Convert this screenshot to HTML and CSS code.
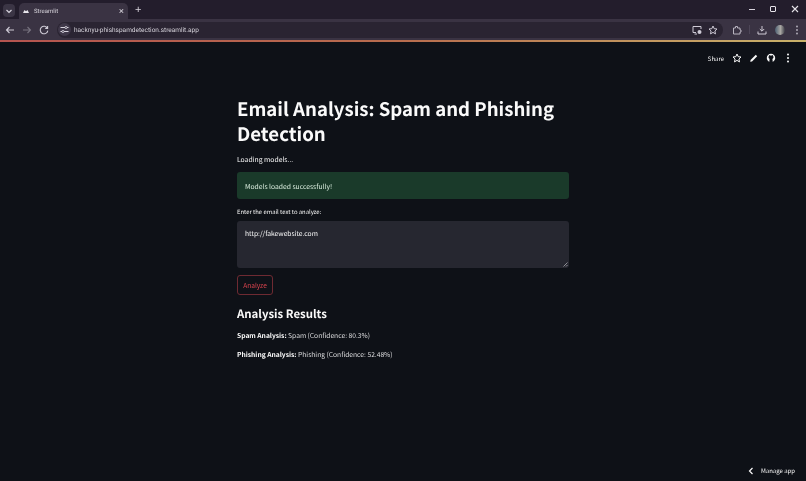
FILE: index.html
```html
<!DOCTYPE html>
<html lang="en">
<head>
    <meta charset="UTF-8">
    <title>Streamlit</title>
    <link rel="stylesheet" href="styles.css">
</head>
<body>
    <div class="tabstrip">
        <div class="tab-search">
            <svg width="8" height="8" viewBox="0 0 8 8"><path d="M1.5 3 L4 5.5 L6.5 3" fill="none" stroke="#d8d4de" stroke-width="1.2"/></svg>
        </div>
        <div class="tab">
            <svg width="6" height="5" viewBox="0 0 8 6"><path d="M0 5 L2 1 L4 2.5 L6 1 L8 5 Z" fill="#e8e6ec"/></svg>
            <span class="tab-title">Streamlit</span>
            <span class="tab-close">&#215;</span>
        </div>
        <span class="new-tab">+</span>
        <div class="win-controls">
            <span class="win-min"></span>
            <span class="win-max"></span>
            <svg width="8" height="8" viewBox="0 0 8 8"><path d="M1 1 L7 7 M7 1 L1 7" stroke="#e6e3ea" stroke-width="1.1"/></svg>
        </div>
    </div>

    <div class="toolbar">
        <div class="nav-icons">
            <svg width="10" height="10" viewBox="0 0 10 10"><path d="M9 5 H1.5 M4.5 2 L1.5 5 L4.5 8" fill="none" stroke="#cfcbd6" stroke-width="1.1"/></svg>
            <svg width="10" height="10" viewBox="0 0 10 10"><path d="M1 5 H8.5 M5.5 2 L8.5 5 L5.5 8" fill="none" stroke="#77727f" stroke-width="1.1"/></svg>
            <svg width="10" height="10" viewBox="0 0 10 10"><path d="M8.4 3.2 A3.8 3.8 0 1 0 8.8 5.6 M8.6 1 V3.4 H6.2" fill="none" stroke="#cfcbd6" stroke-width="1.1"/></svg>
        </div>
        <div class="omnibox">
            <span class="site-icon">
                <svg width="9" height="9" viewBox="0 0 9 9"><path d="M0.5 2.5 H5 M7 2.5 H8.5 M0.5 6.5 H2 M4 6.5 H8.5" stroke="#d8d4de" stroke-width="1"/><circle cx="6" cy="2.5" r="1.1" fill="none" stroke="#d8d4de" stroke-width="0.8"/><circle cx="3" cy="6.5" r="1.1" fill="none" stroke="#d8d4de" stroke-width="0.8"/></svg>
            </span>
            <span class="url">hacknyu-phishspamdetection.streamlit.app</span>
            <div class="omni-right">
                <svg width="10" height="10" viewBox="0 0 10 10"><path d="M4 7.5 H1 V1.5 H9 V4 M2.5 9 H5" fill="none" stroke="#cfcbd6" stroke-width="1"/><circle cx="7.5" cy="7" r="2" fill="#cfcbd6"/></svg>
                <svg width="10" height="10" viewBox="0 0 10 10"><path d="M5 1 L6.2 3.7 L9 4 L6.9 6 L7.5 8.9 L5 7.4 L2.5 8.9 L3.1 6 L1 4 L3.8 3.7 Z" fill="none" stroke="#cfcbd6" stroke-width="1"/></svg>
            </div>
        </div>
        <div class="tool-icons">
            <svg width="10" height="10" viewBox="0 0 10 10"><path d="M1.5 3 H3.5 V1.5 H5.5 V3 H8 V5 H9 V7 H8 V9 H1.5 Z" fill="none" stroke="#b9b5c0" stroke-width="1"/></svg>
            <span class="tool-sep"></span>
            <svg width="10" height="10" viewBox="0 0 10 10"><path d="M5 1 V6 M2.8 4 L5 6.2 L7.2 4 M1 6.5 V9 H9 V6.5" fill="none" stroke="#cfcbd6" stroke-width="1"/></svg>
            <span class="avatar"></span>
            <svg class="tool-menu" width="4" height="10" viewBox="0 0 4 10"><circle cx="2" cy="1.5" r="0.9" fill="#b9b5c0"/><circle cx="2" cy="5" r="0.9" fill="#b9b5c0"/><circle cx="2" cy="8.5" r="0.9" fill="#b9b5c0"/></svg>
        </div>
    </div>
    <div class="top-line"></div>

    <div class="app">
        <header class="app-header">
            <span class="share">Share</span>
            <svg width="10" height="10" viewBox="0 0 10 10"><path d="M5 1 L6.2 3.7 L9 4 L6.9 6 L7.5 8.9 L5 7.4 L2.5 8.9 L3.1 6 L1 4 L3.8 3.7 Z" fill="none" stroke="#fafafa" stroke-width="1"/></svg>
            <svg width="10" height="10" viewBox="0 0 10 10"><path d="M1.2 8.8 L1.6 7 L6.8 1.8 L8.2 3.2 L3 8.4 Z" fill="#fafafa"/></svg>
            <svg width="10" height="10" viewBox="0 0 10 10"><path d="M3.4 8.8 C1.8 8.1 0.8 6.7 0.8 5 C0.8 2.7 2.7 0.8 5 0.8 C7.3 0.8 9.2 2.7 9.2 5 C9.2 6.7 8.2 8.1 6.6 8.8 V7 C6.6 6.4 6.3 6.1 6.2 6 C7 5.8 7.5 5.2 7.5 4.3 C7.5 3.9 7.3 3.4 7 3.1 C7.1 2.8 7.1 2.4 7 2.1 C6.6 2.1 6.2 2.4 6 2.6 C5.4 2.4 4.6 2.4 4 2.6 C3.8 2.4 3.4 2.1 3 2.1 C2.9 2.4 2.9 2.8 3 3.1 C2.7 3.4 2.5 3.9 2.5 4.3 C2.5 5.2 3 5.8 3.8 6 C3.7 6.1 3.4 6.4 3.4 7 Z" fill="#fafafa"/></svg>
            <svg width="10" height="10" viewBox="0 0 10 10"><circle cx="5" cy="1.5" r="1" fill="#fafafa"/><circle cx="5" cy="5" r="1" fill="#fafafa"/><circle cx="5" cy="8.5" r="1" fill="#fafafa"/></svg>
        </header>

        <main class="block">
            <h1>Email Analysis: Spam and Phishing Detection</h1>
            <p class="loading">Loading models...</p>
            <div class="alert">Models loaded successfully!</div>
            <label class="field-label">Enter the email text to analyze:</label>
            <div class="textarea">
                http://fakewebsite.com
                <svg class="grip" width="5" height="5" viewBox="0 0 5 5"><path d="M0.5 4.5 L4.5 0.5 M3 4.5 L4.5 3" stroke="#a8a8ae" stroke-width="0.8"/></svg>
            </div>
            <button class="analyze">Analyze</button>
            <h2>Analysis Results</h2>
            <p class="result"><strong>Spam Analysis:</strong> Spam (Confidence: 80.3%)</p>
            <p class="result"><strong>Phishing Analysis:</strong> Phishing (Confidence: 52.48%)</p>
        </main>

        <div class="manage">
            <svg width="6" height="8" viewBox="0 0 6 8"><path d="M4.5 1 L1.5 4 L4.5 7" fill="none" stroke="#fafafa" stroke-width="1.2"/></svg>
            <span>Manage app</span>
        </div>
    </div>
</body>
</html>
```

FILE: styles.css
```css
body, html {
    margin: 0;
    padding: 0;
    height: 100%;
    overflow: hidden;
    background: #0e1117;
    font-family: 'Noto Sans CJK SC', 'Noto Sans', sans-serif;
    text-rendering: geometricPrecision;
}
body {
    display: flex;
    flex-direction: column;
    filter: blur(0.3px);
}

/* browser chrome */
.tabstrip {
    height: 19px;
    padding-left: 3px;
    display: flex;
    align-items: flex-end;
    background: #231d2c;
    flex-shrink: 0;
}
.tab-search {
    width: 12px;
    height: 13px;
    margin: 0 4px 2px 0;
    background: #3b3545;
    border-radius: 4px;
    display: flex;
    align-items: center;
    justify-content: center;
}
.tab {
    width: 109px;
    height: 16px;
    padding: 0 4px 0 4px;
    box-sizing: border-box;
    display: flex;
    align-items: center;
    background: #3a3343;
    border-radius: 5px 5px 0 0;
}
.tab-title {
    flex: 1;
    margin-left: 5px;
    font-family: 'Roboto', sans-serif;
    font-size: 6px;
    color: #d6d3db;
}
.tab-close {
    font-family: 'Liberation Sans', sans-serif;
    font-size: 9px;
    color: #e0dde5;
}
.new-tab {
    margin: 0 0 2px 7px;
    font-family: 'Liberation Sans', sans-serif;
    font-size: 11px;
    color: #d8d4de;
    line-height: 14px;
}
.win-controls {
    margin: 0 7px 6px auto;
    display: flex;
    align-items: center;
    gap: 15px;
}
.win-min {
    width: 6px;
    height: 1px;
    background: #d8d4de;
}
.win-max {
    width: 4px;
    height: 4px;
    border: 1px solid #e6e3ea;
    border-radius: 1px;
}
.toolbar {
    height: 21px;
    display: flex;
    align-items: center;
    background: #3a3343;
    flex-shrink: 0;
}
.nav-icons {
    display: flex;
    gap: 7px;
    margin: 0 8px 0 5px;
}
.omnibox {
    flex: 1;
    height: 16px;
    display: flex;
    align-items: center;
    background: #2a2432;
    border-radius: 8px;
}
.site-icon {
    width: 13px;
    height: 13px;
    margin: 0 3px 0 1px;
    background: #3f3849;
    border-radius: 50%;
    display: flex;
    align-items: center;
    justify-content: center;
}
.url {
    flex: 1;
    font-family: 'Roboto', sans-serif;
    font-size: 6.5px;
    color: #d6d3db;
}
.omni-right {
    display: flex;
    gap: 6px;
    margin-right: 5px;
}
.tool-icons {
    display: flex;
    align-items: center;
    margin: 0 7px 0 9px;
    gap: 7px;
}
.tool-sep {
    width: 1px;
    height: 9px;
    background: #4d4657;
}
.avatar {
    width: 10px;
    height: 10px;
    margin-left: 1px;
    border-radius: 50%;
    background: linear-gradient(90deg, #4c5f72 0%, #a9a7a3 55%, #3a3a44 100%);
}
.tool-menu {
    margin-left: 3px;
}
.top-line {
    height: 2px;
    background: linear-gradient(90deg, #b5544f 0%, #b86d4e 50%, #c9b26a 100%);
    flex-shrink: 0;
}

/* streamlit app */
.app {
    flex: 1;
    position: relative;
    color: #fafafa;
}
.app-header {
    height: 32px;
    padding-right: 13px;
    display: flex;
    align-items: center;
    justify-content: flex-end;
    gap: 7px;
}
.share {
    margin-right: 1px;
    font-size: 6px;
}
.block {
    width: 332px;
    margin: 22px auto 0;
}
h1 {
    margin: 0;
    font-size: 18.6px;
    font-weight: 700;
    line-height: 25px;
}
.loading {
    margin: 7px 0 0;
    font-size: 6.8px;
    line-height: 12px;
}
.alert {
    height: 27px;
    margin-top: 7px;
    padding-left: 8px;
    display: flex;
    align-items: center;
    background: #1a3a2a;
    color: #d9ecdd;
    border-radius: 3px;
    font-size: 6.75px;
}
.field-label {
    display: block;
    margin-top: 8px;
    font-size: 5.9px;
    line-height: 10px;
}
.textarea {
    position: relative;
    height: 47px;
    margin-top: 4px;
    padding: 7px 8px 0;
    box-sizing: border-box;
    background: #262730;
    border-radius: 3px;
    font-size: 6.7px;
    line-height: 10px;
}
.grip {
    position: absolute;
    right: 1px;
    bottom: 1px;
}
.analyze {
    display: block;
    width: 36px;
    height: 20px;
    margin-top: 7px;
    padding: 0;
    background: transparent;
    border: 1px solid #6e2a32;
    border-radius: 3px;
    color: #d8434d;
    font-family: inherit;
    font-size: 6.6px;
}
h2 {
    margin: 9px 0 0;
    font-size: 11.4px;
    font-weight: 600;
    line-height: 20px;
}
.result {
    margin: 5px 0 0;
    font-size: 6.7px;
    line-height: 12px;
    color: #dcdcde;
}
.result + .result {
    margin-top: 7px;
}
.result strong {
    color: #fafafa;
}
.manage {
    position: absolute;
    right: 11px;
    bottom: 6px;
    display: flex;
    align-items: center;
    gap: 7px;
    font-size: 6px;
}
```
